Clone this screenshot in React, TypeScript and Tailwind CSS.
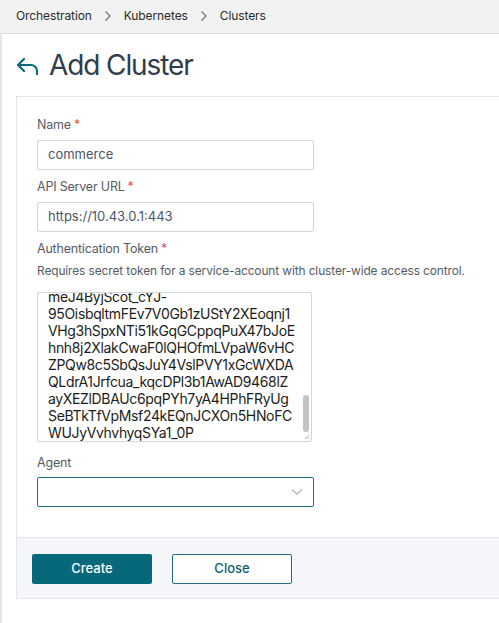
import React from 'react';

const tokenLines = [
    'meJ4ByjScot_cYJ-',
    '95OisbqltmFEv7V0Gb1zUStY2XEoqnj1',
    'VHg3hSpxNTi51kGqGCppqPuX47bJoE',
    'hnh8j2XlakCwaF0lQHOfmLVpaW6vHC',
    'ZPQw8c5SbQsJuY4VslPVY1xGcWXDA',
    'QLdrA1Jrfcua_kqcDPl3b1AwAD9468lZ',
    'ayXEZlDBAUc6pqPYh7yA4HPhFRyUg',
    'SeBTkTfVpMsf24kEQnJCXOn5HNoFC',
    'WUJyVvhvhyqSYa1_0P',
];

const Chevron: React.FC = () => (
    <svg width="8" height="12" viewBox="0 0 8 12" className="mx-[12px]">
        <path d="M1.5 1.5 6 6l-4.5 4.5" fill="none" stroke="#6b6b6b" strokeWidth="1.1" />
    </svg>
);

const FieldLabel: React.FC<{ text: string; required?: boolean }> = ({ text, required }) => (
    <div className="h-4 text-[12.5px] leading-4 tracking-[-0.2px] text-[#555b63]">
        {text}
        {required && <span className="ml-[3px] text-[#e5534b]">*</span>}
    </div>
);

export default function App() {
    return (
        <div className="h-[623px] w-[499px] overflow-hidden bg-white font-['Inter',sans-serif]">
            <div className="flex h-[34px] items-center border-b border-[#dedede] bg-[#f2f2f2] pb-[2px] pl-4 text-[12px] tracking-[-0.1px] text-[#2b2b2b]">
                <span>Orchestration</span>
                <Chevron />
                <span>Kubernetes</span>
                <Chevron />
                <span>Clusters</span>
            </div>
            <div className="h-[589px] border-l-2 border-[#e6e6e6] pl-[14px]">
                <div className="flex h-[62px] items-center">
                    <svg width="24" height="18" viewBox="0 0 24 18" className="mt-[2px]">
                        <path d="M8 2 2 8l6 6" fill="none" stroke="#0b6b7c" strokeWidth="2.2" strokeLinecap="round" strokeLinejoin="round" />
                        <path d="M2.5 8H15a6 6 0 0 1 6 6v3" fill="none" stroke="#0b6b7c" strokeWidth="2.2" strokeLinecap="round" />
                    </svg>
                    <h1 className="ml-[9px] text-[28px] font-normal tracking-[-1.1px] text-[#323c4c]">Add Cluster</h1>
                </div>
                <div className="w-[520px] border border-[#e2e4e8]">
                    <div className="px-5 pb-[30px] pt-5">
                        <FieldLabel text="Name" required />
                        <div className="mt-[7px] flex h-[30px] w-[277px] items-center rounded-[2px] border border-[#d3d6db] px-[10px] text-[13px] text-[#4b5669]">
                            commerce
                        </div>
                        <div className="mt-[9px]">
                            <FieldLabel text="API Server URL" required />
                        </div>
                        <div className="mt-[7px] flex h-[30px] w-[277px] items-center rounded-[2px] border border-[#d3d6db] px-[10px] text-[13px] text-[#4b5669]">
                            https://10.43.0.1:443
                        </div>
                        <div className="mt-[9px]">
                            <FieldLabel text="Authentication Token" required />
                        </div>
                        <div className="mt-[6px] h-4 text-[11.9px] leading-4 tracking-[-0.1px] text-[#555b63]">
                            Requires secret token for a service-account with cluster-wide access control.
                        </div>
                        <div className="relative mt-[13px] h-[150px] w-[275px] rounded-[2px] border border-[#d3d6db]">
                            <div className="flex h-full flex-col justify-end overflow-hidden pl-[10px] text-[14px] leading-[17px] tracking-[-0.35px] text-[#1c1c1c]">
                                {tokenLines.map(line => (
                                    <div key={line} className="whitespace-nowrap">{line}</div>
                                ))}
                            </div>
                            <div className="absolute right-[2px] top-[102px] h-[37px] w-[6px] rounded-full bg-[#c4c4c4]" />
                            <svg width="7" height="7" viewBox="0 0 7 7" className="absolute bottom-[1px] right-[1px]">
                                <path d="M6 2 2 6M6 4.5 4.5 6" stroke="#999" strokeWidth="0.8" />
                            </svg>
                        </div>
                        <div className="mt-[13px]">
                            <FieldLabel text="Agent" />
                        </div>
                        <div className="mt-[6px] flex h-[30px] w-[277px] items-center justify-end rounded-[2px] border border-[#1f6e7e] pr-[10px]">
                            <svg width="12" height="8" viewBox="0 0 12 8">
                                <path d="M1 1.5 6 6l5-4.5" fill="none" stroke="#b3bac2" strokeWidth="1.4" />
                            </svg>
                        </div>
                    </div>
                    <div className="flex h-[61px] items-center gap-5 border-t border-[#e2e4e8] bg-[#f4f6f9] pl-[15px] pt-[2px]">
                        <button className="h-[30px] w-[120px] rounded-[2px] bg-[#07687a] text-[13px] font-medium text-white">
                            Create
                        </button>
                        <button className="h-[30px] w-[120px] rounded-[2px] border border-[#1f6e7e] bg-white text-[13px] font-medium text-[#0b5f70]">
                            Close
                        </button>
                    </div>
                </div>
            </div>
        </div>
    );
}
